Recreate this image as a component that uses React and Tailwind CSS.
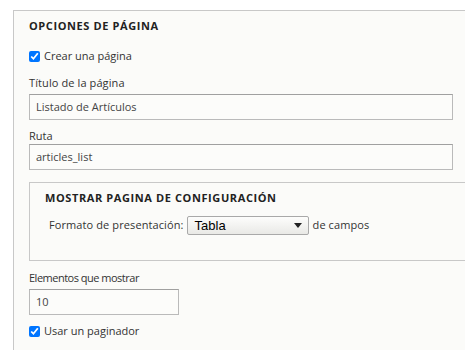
import React from "react";

const font = { fontFamily: '"Open Sans", "Noto Sans", sans-serif' };

function Check({ label, className = "" }) {
  return (
    <label className={`flex h-4 items-center gap-[4px] leading-4 text-[#333] ${className}`}>
      <input type="checkbox" defaultChecked className="m-0 h-[11px] w-[11px] accent-[#0075ff]" />
      <span>{label}</span>
    </label>
  );
}

function TextInput({ value, className = "" }) {
  return (
    <div
      className={`flex h-[26px] items-center border border-[#bababa] border-t-[#a0a0a0] bg-[#fcfcfa] pl-[6px] text-[#444] ${className}`}
    >
      {value}
    </div>
  );
}

export default function App() {
  return (
    <div className="h-[350px] w-[465px] overflow-hidden bg-white pl-[13px] pt-[10px] text-[11px]" style={font}>
      <div className="h-full border-l border-t border-[#c8c8c8] bg-[#fbfbf9] pl-[15px] pt-[7px]">
        <h2 className="h-4 text-[11px] font-bold uppercase leading-4 tracking-[0.6px] text-[#222]">
          Opciones de página
        </h2>

        <Check label="Crear una página" className="mt-[14px]" />

        <div className="mt-[11px] h-4 leading-4 tracking-[0.1px] text-[#333]">Título de la página</div>
        <TextInput value="Listado de Artículos" className="mt-[3px] w-[424px]" />

        <div className="mt-[8px] h-4 leading-4 text-[#333]">Ruta</div>
        <TextInput value="articles_list" className="w-[424px]" />

        {/* nested fieldset */}
        <div className="mt-[12px] h-[79px] border-y border-l border-[#c8c8c8] pl-[15px] pt-[7px]">
          <h3 className="h-4 text-[11px] font-bold uppercase leading-4 tracking-[0.6px] text-[#222]">
            Mostrar pagina de configuración
          </h3>
          <div className="mt-[10px] flex h-[19px] items-center pl-[4px] tracking-[0.1px] text-[#333]">
            <span>Formato de presentación:</span>
            <div
              className="ml-[3px] flex h-[19px] w-[122px] items-center justify-between rounded-[2px] border border-[#a9a9a9] bg-gradient-to-b from-[#fdfdfc] to-[#e9e9e6] pl-[7px] pr-[6px] text-[13px] tracking-normal text-black"
              style={{ fontFamily: '"Liberation Sans", Arial, sans-serif' }}
            >
              <span>Tabla</span>
              <svg width="8" height="5" viewBox="0 0 8 5">
                <path d="M0 0h8L4 5z" fill="#222" />
              </svg>
            </div>
            <span className="ml-[4px]">de campos</span>
          </div>
        </div>

        <div className="mt-[9px] h-4 leading-4 tracking-[-0.5px] text-[#333]">Elementos que mostrar</div>
        <TextInput value="10" className="mt-[3px] w-[150px]" />

        <Check label="Usar un paginador" className="mt-[8px]" />
      </div>
    </div>
  );
}
